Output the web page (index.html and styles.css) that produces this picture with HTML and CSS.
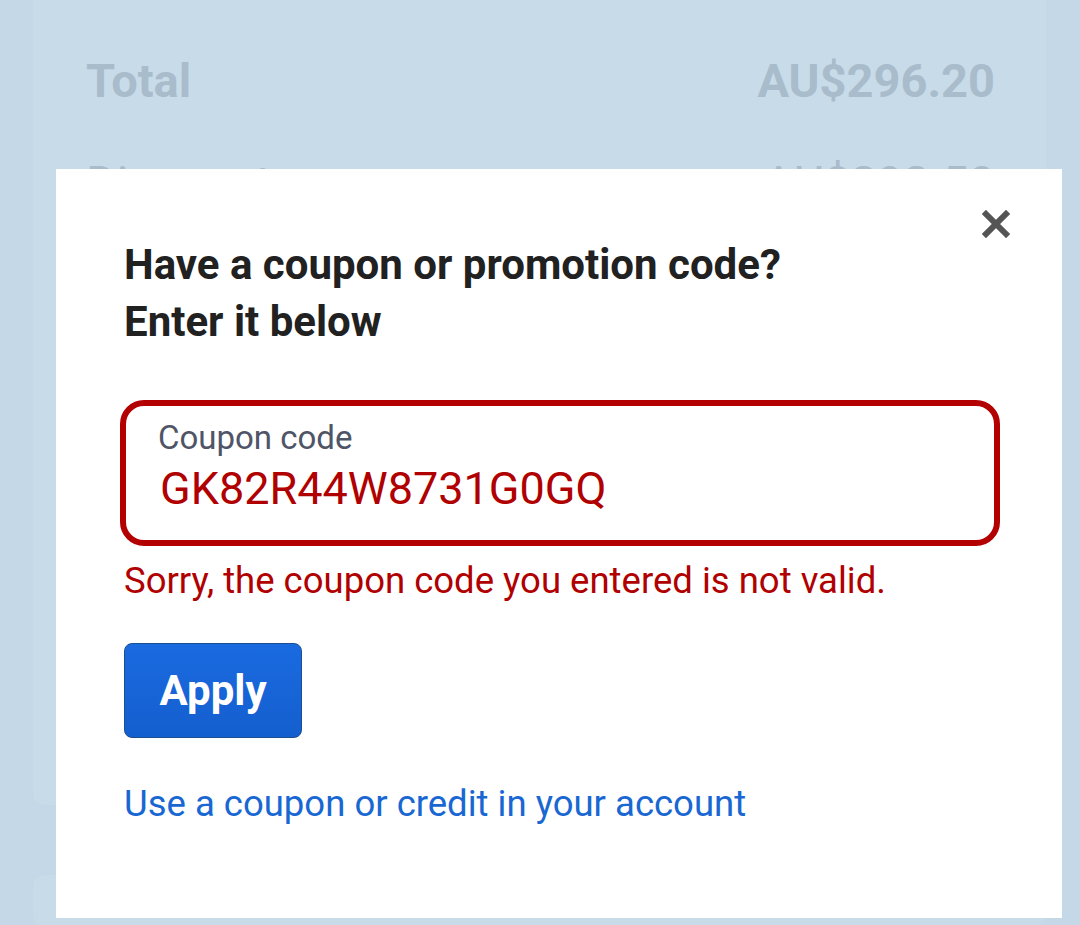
FILE: index.html
```html
<!DOCTYPE html>
<html>
<head>
    <title>Checkout | Coupon</title>
    <link rel="stylesheet" href="styles.css">
</head>
<body>
    <div class="summary-card">
        <div class="summary-row total">
            <span>Total</span>
            <span>AU$296.20</span>
        </div>
        <div class="summary-row">
            <span>Discount</span>
            <span>AU$292.50</span>
        </div>
    </div>
    <div class="summary-card lower"></div>

    <div class="modal">
        <button class="close" aria-label="Close">
            <svg width="28" height="28" viewBox="0 0 28 28"><path d="M4 4 L24 24 M24 4 L4 24" stroke="#555" stroke-width="6" stroke-linecap="square"/></svg>
        </button>
        <h2 class="modal-title">Have a coupon or promotion code?<br>Enter it below</h2>
        <div class="field error">
            <label for="coupon">Coupon code</label>
            <input id="coupon" type="text" value="GK82R44W8731G0GQ">
        </div>
        <p class="error-text">Sorry, the coupon code you entered is not valid.</p>
        <button class="apply">Apply</button>
        <a class="account-link" href="#">Use a coupon or credit in your account</a>
    </div>
</body>
</html>
```

FILE: styles.css
```css
*, *::before, *::after { padding: 0; margin: 0; box-sizing: border-box; font-family: 'Roboto', 'Liberation Sans', sans-serif; }
body { background: #c5d8e7; width: 1080px; height: 925px; overflow: hidden; position: relative; }

.summary-card { margin: 0 34px 0 33px; background: #c8dbe9; border-radius: 0 0 12px 12px; padding: 51px 51px 0 53px; height: 805px; }
.summary-card.lower { margin-top: 70px; border-radius: 12px; height: 50px; }
.summary-row { display: flex; justify-content: space-between; font-size: 47px; color: #a9bccb; height: 102px; line-height: 60px; }
.summary-row.total { font-weight: bold; }

.modal { position: absolute; left: 56px; top: 169px; width: 1006px; height: 749px; background: #fff; padding: 67px 62px 0 68px; }
.close { position: absolute; left: 926px; top: 41px; width: 28px; height: 28px; border: none; background: none; }
.modal-title { font-size: 42px; font-weight: bold; line-height: 57px; color: #212121; }

.field { margin-top: 50px; margin-left: -4px; width: 880px; height: 146px; border: 6px solid #b30000; border-radius: 24px; padding: 14px 32px 0; }
.field label { display: block; font-size: 33px; color: #4f5466; line-height: 36px; }
.field input { display: block; width: 100%; border: none; outline: none; background: none; font-size: 45px; color: #b00000; line-height: 50px; height: 50px; margin-top: 8px; padding-left: 2px; }

.error-text { color: #b00000; font-size: 36.5px; line-height: 44px; margin-top: 13px; }

.apply { display: block; margin-top: 40px; width: 178px; height: 95px; border: 1px solid #1c4f8f; border-radius: 8px; background: linear-gradient(#1a6ae0, #145fcf); color: #fff; font-size: 42px; font-weight: bold; }

.account-link { display: block; margin-top: 44px; color: #1967d2; font-size: 36.5px; line-height: 44px; text-decoration: none; }
```
